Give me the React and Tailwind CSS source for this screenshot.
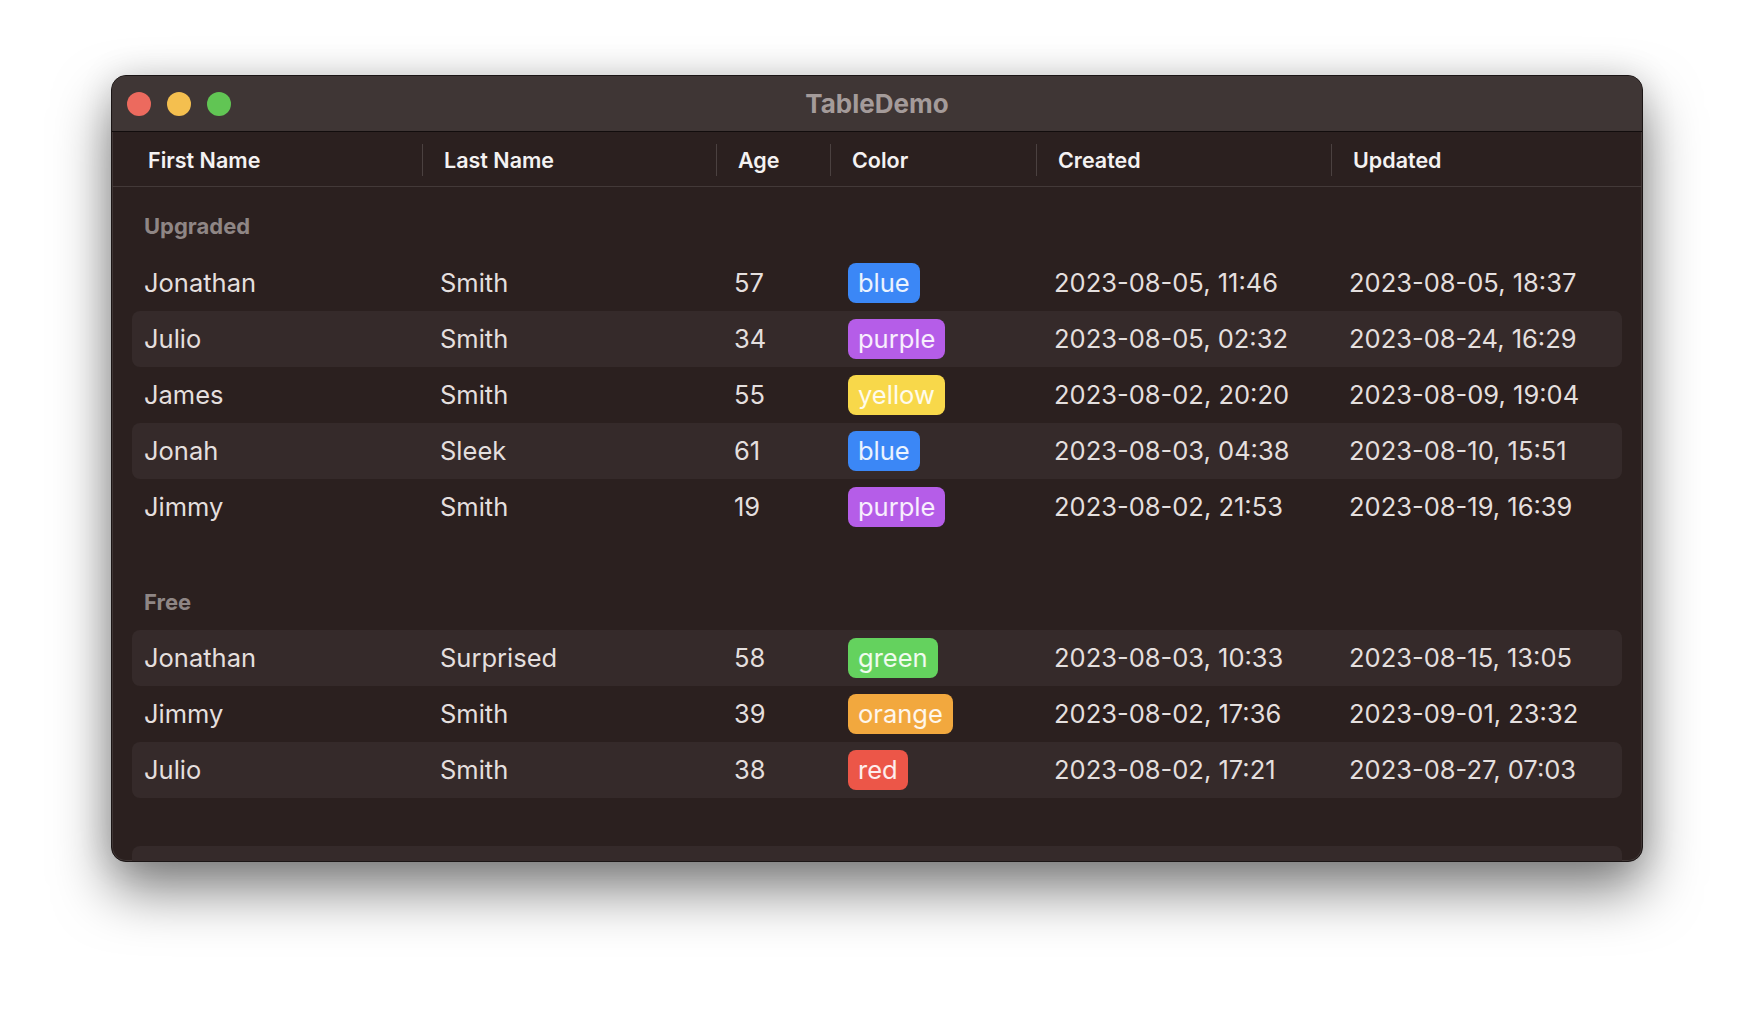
import React from 'react'

// ─── Data ───────────────────────────────────────────────────────────────────
const sections = [
  {
    title: 'Upgraded',
    rows: [
      ['Jonathan', 'Smith', 57, 'blue', '2023-08-05, 11:46', '2023-08-05, 18:37'],
      ['Julio', 'Smith', 34, 'purple', '2023-08-05, 02:32', '2023-08-24, 16:29'],
      ['James', 'Smith', 55, 'yellow', '2023-08-02, 20:20', '2023-08-09, 19:04'],
      ['Jonah', 'Sleek', 61, 'blue', '2023-08-03, 04:38', '2023-08-10, 15:51'],
      ['Jimmy', 'Smith', 19, 'purple', '2023-08-02, 21:53', '2023-08-19, 16:39'],
    ],
  },
  {
    title: 'Free',
    rows: [
      ['Jonathan', 'Surprised', 58, 'green', '2023-08-03, 10:33', '2023-08-15, 13:05'],
      ['Jimmy', 'Smith', 39, 'orange', '2023-08-02, 17:36', '2023-09-01, 23:32'],
      ['Julio', 'Smith', 38, 'red', '2023-08-02, 17:21', '2023-08-27, 07:03'],
    ],
  },
]

const badgeColors = {
  blue: 'bg-[#3b87f6]',
  purple: 'bg-[#b55de8]',
  yellow: 'bg-[#f8d84a]',
  green: 'bg-[#64d25e]',
  orange: 'bg-[#f2a83e]',
  red: 'bg-[#ec5648]',
}

const columns = ['First Name', 'Last Name', 'Age', 'Color', 'Created', 'Updated']
const gridCols = 'grid grid-cols-[296px_294px_114px_206px_295px_1fr]'

// ─── Pieces ─────────────────────────────────────────────────────────────────
function Badge({ color }) {
  return (
    <span className={`inline-flex h-[40px] items-center rounded-lg px-[10px] text-[25.5px] text-white/90 ${badgeColors[color]}`}>
      {color}
    </span>
  )
}

function Row({ row, striped }) {
  const [first, last, age, color, created, updated] = row
  return (
    <div className={`${gridCols} h-[56px] items-center rounded-lg px-[12px] text-[25.5px] text-[#e4dfde] ${striped ? 'bg-[#352a2a]' : ''}`}>
      <span>{first}</span>
      <span>{last}</span>
      <span>{age}</span>
      <span><Badge color={color} /></span>
      <span>{created}</span>
      <span>{updated}</span>
    </div>
  )
}

function TrafficLights() {
  return (
    <div className="flex items-center gap-[16px] pl-[15px]">
      <span className="h-[24px] w-[24px] rounded-full bg-[#ec6a5e]" />
      <span className="h-[24px] w-[24px] rounded-full bg-[#f4bf4f]" />
      <span className="h-[24px] w-[24px] rounded-full bg-[#61c554]" />
    </div>
  )
}

// ─── App ────────────────────────────────────────────────────────────────────
export default function App() {
  let index = 0

  return (
    <div className="flex min-h-screen justify-center bg-white pt-[75px] font-['Inter',sans-serif]">
      <div className="flex h-[787px] w-[1532px] flex-col overflow-hidden rounded-[15px] border border-[#1b1515] bg-[#2b201f] shadow-[0_28px_55px_rgba(0,0,0,0.5),0_0_35px_rgba(0,0,0,0.12),inset_0_0_0_1px_rgba(255,255,255,0.1)]">
        {/* Title bar */}
        <div className="grid h-[56px] shrink-0 grid-cols-[1fr_auto_1fr] items-center border-b border-[#120d0d] bg-[#3f3635]">
          <TrafficLights />
          <span className="text-[26px] font-bold text-[#a49b9a]">TableDemo</span>
          <span />
        </div>

        {/* Header */}
        <div className="shrink-0 border-b border-[#433938] px-[20px]">
          <div className={`${gridCols} h-[54px] items-center pl-[16px] pt-[2px] text-[21.5px] font-semibold text-[#f4f2f2]`}>
            {columns.map((c, i) => (
              <div key={c} className="flex items-center justify-between pr-[21px]">
                <span>{c}</span>
                {i < columns.length - 1 && <span className="h-[32px] w-px bg-[#4b4140]" />}
              </div>
            ))}
          </div>
        </div>

        {/* Body */}
        <div className="flex flex-col px-[20px]">
          {sections.map((s, si) => (
            <div key={s.title} className={si === 0 ? 'pt-[25px]' : 'pt-[53px]'}>
              <div className="flex h-[28px] items-center px-[12px] text-[22px] font-bold text-[#8f8685]">
                {s.title}
              </div>
              <div className={`${si === 0 ? 'mt-[15px]' : 'mt-[14px]'} flex flex-col`}>
                {s.rows.map((r) => {
                  const striped = index % 2 === 1
                  index += 1
                  return <Row key={index} row={r} striped={striped} />
                })}
              </div>
            </div>
          ))}
          <div className="mt-[48px] h-[56px] shrink-0 rounded-lg bg-[#352a2a]" />
        </div>
      </div>
    </div>
  )
}
